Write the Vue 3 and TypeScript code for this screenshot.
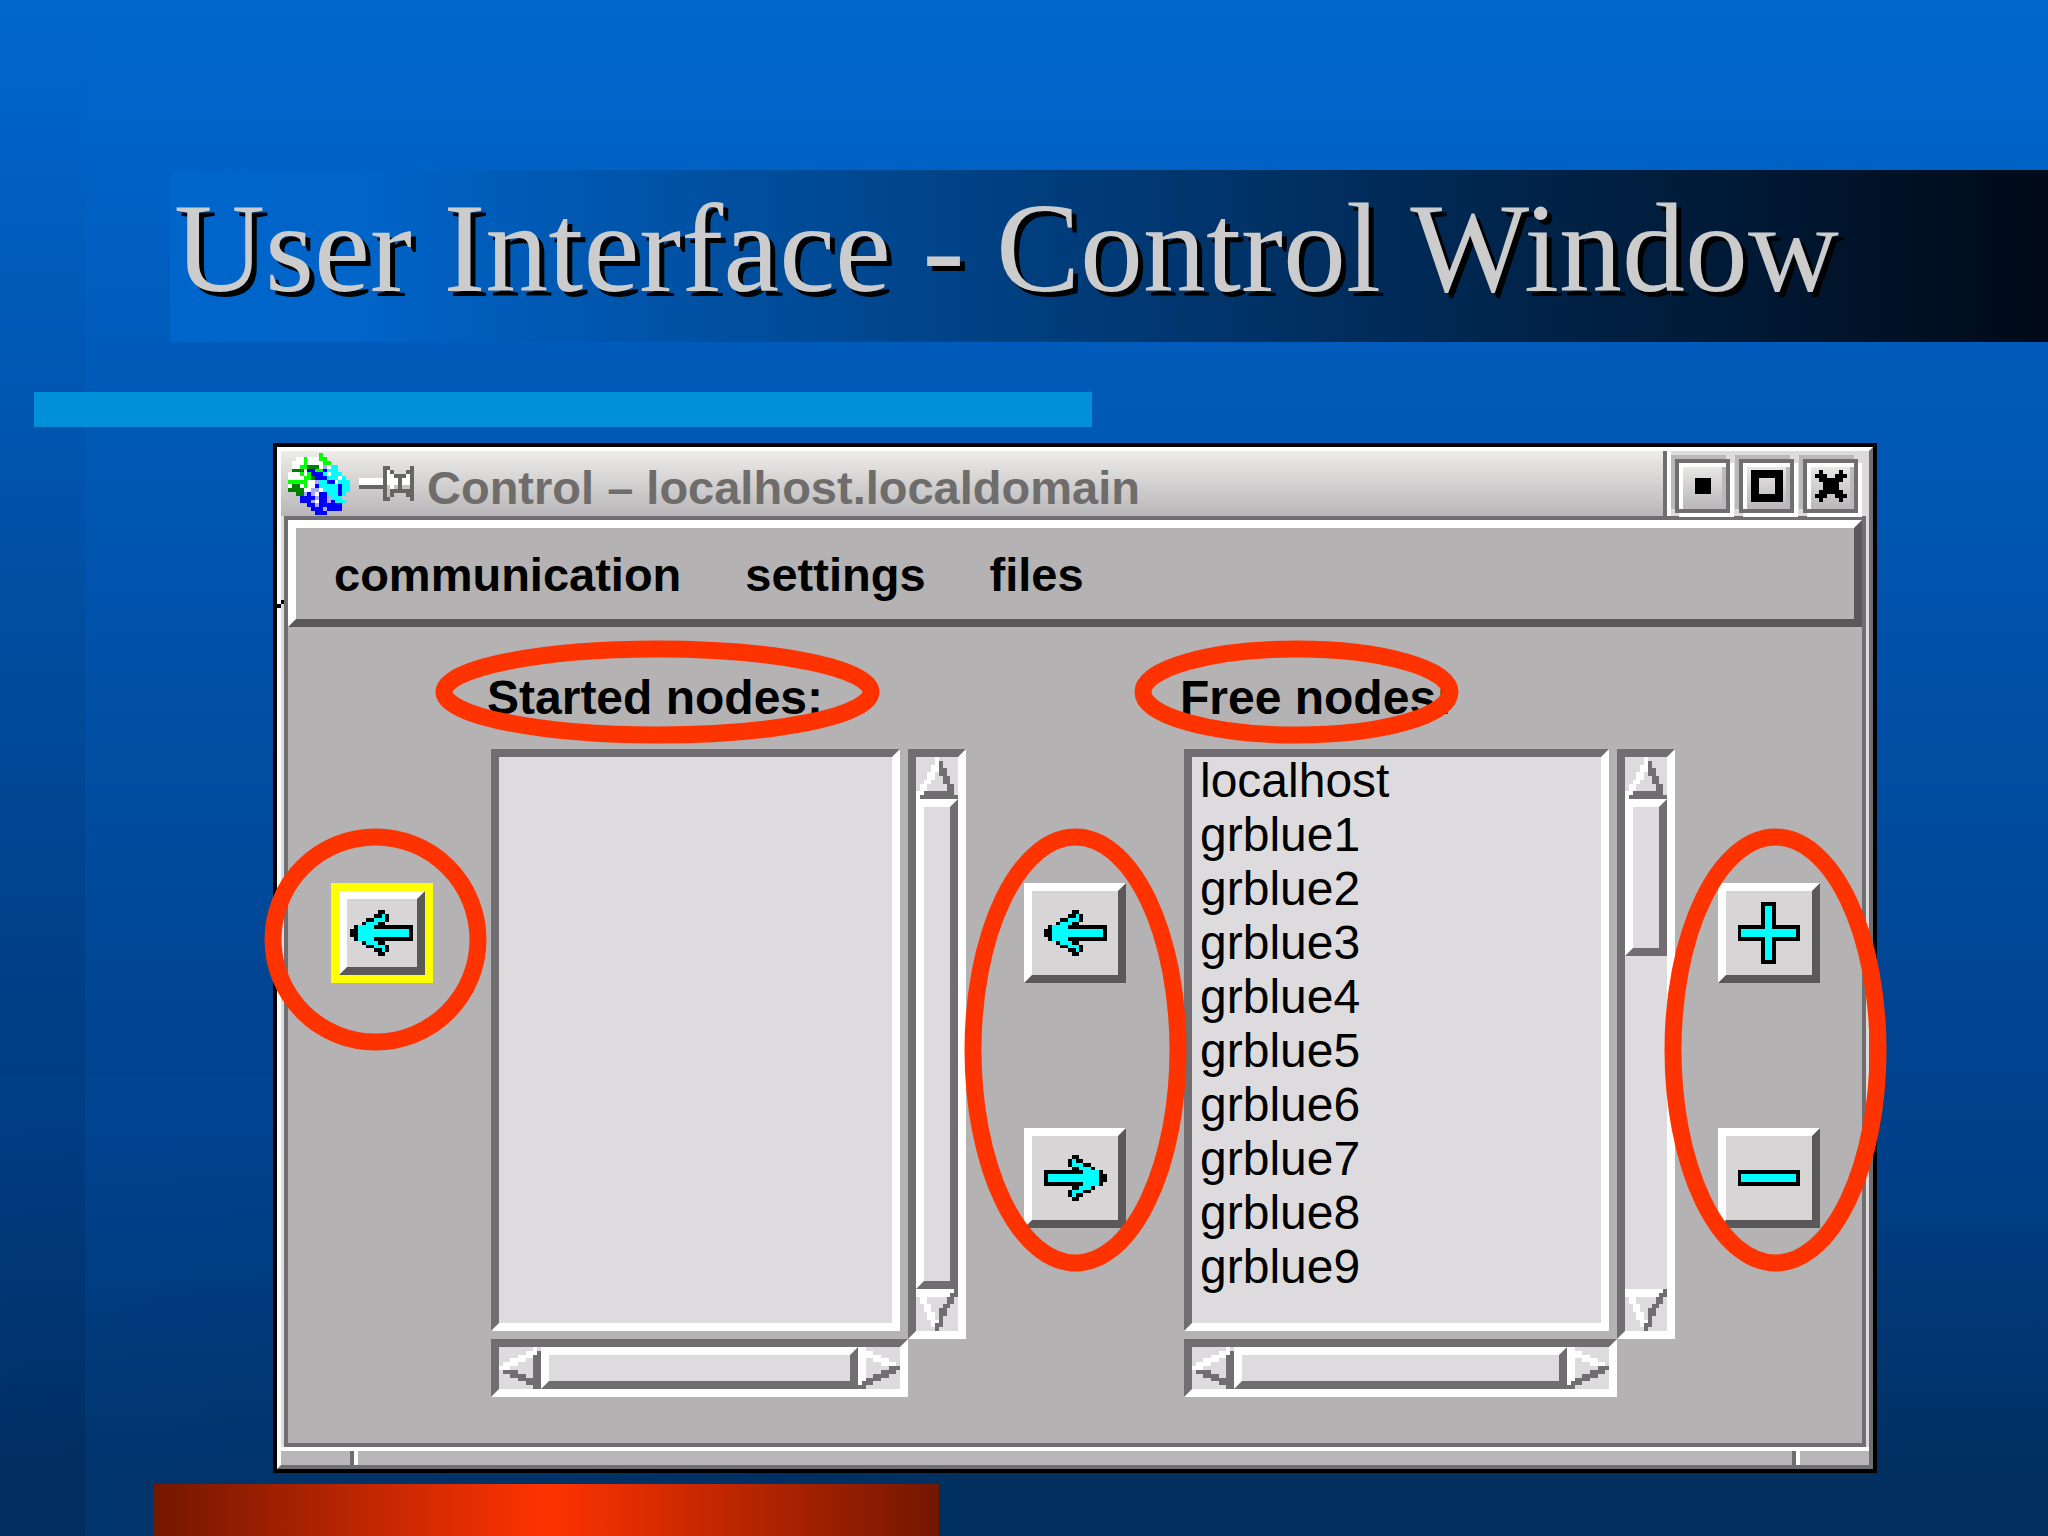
<script setup lang="ts">
import { ref } from 'vue'

interface Cell { x: number; y: number; w: number; fill: string }

const palette: Record<string, string> = {
  k: '#000000', c: '#00ffff', w: '#ffffff', d: '#706e70', g: '#00ff00',
  G: '#008000', b: '#0000ff', l: '#a8a8ff', n: '#666564', m: '#c4c2c4',
}

// Turns rows of colour letters into horizontal runs of cells.
function cells(rows: string[]): Cell[] {
  const out: Cell[] = []
  rows.forEach((row, y) => {
    let x = 0
    while (x < row.length) {
      let w = 1
      while (row[x + w] === row[x]) w++
      const fill = palette[row[x]]
      if (fill) out.push({ x, y, w, fill })
      x += w
    }
  })
  return out
}

const flip = (rows: string[]) => rows.map((r) => r.split('').reverse().join(''))

const arrow = [
  '.......kk.......',
  '......kkck......',
  '....kkccck......',
  '...kccckk.......',
  '.kcccckkkkkkkkkk',
  'kkccccccccccccck',
  'kkccccccccccccck',
  '.kcccckkkkkkkkkk',
  '...kccckk.......',
  '....kkccck......',
  '......kkck......',
  '.......kk.......',
]
const leftArrow = cells(arrow)
const rightArrow = cells(flip(arrow))

const globe = cells([
  '........g.......',
  '..wwgwwwgg......',
  '.wwwgwwwwgg.....',
  '.wwggGGGwlwcc...',
  '.GGGwbbggbccc...',
  'wwwgwgbbbcwccc..',
  'wwwwggGbbbcccwc.',
  'gggggwwlccbbwccc',
  'wGGwgwwbcccccbcc',
  'GGGGwwllwccccbcc',
  '..GGlblwbbcccbc.',
  '...bbbblbblccc..',
  '...bbblwbblbccc.',
  '.....bblbbbbbb..',
  '......bbblbbbb..',
  '.......bbb......',
])

const pin = cells([
  '......nn.....n',
  '......nwn...nn',
  '......nwwnnnwn',
  'wwwwwwnwwwnwwn',
  'wwwwwwnwwwnwwn',
  'nnnnnnnmwmnmmn',
  '......nmnnnnnn',
  '......nmn...nn',
  '......nn.....n',
])

const cross = cells([
  '.k....k.',
  'kkk..kkk',
  '.kkkkkk.',
  '..kkkk..',
  '..kkkk..',
  '.kkkkkk.',
  'kkk..kkk',
  '.k....k.',
])

const up = cells([
  '.....w.....',
  '.....wd....',
  '....wwd....',
  '....wwdd...',
  '...ww.dd...',
  '...ww..dd..',
  '..ww...dd..',
  '.ww.....dd.',
  '.ww.....dd.',
  'wwdddddddd.',
  'wdddddddddd',
])
const down = cells([
  'wwwwwwwwwwd',
  'wwwwwwwwwdd',
  '.ww.....dd.',
  '.ww.....dd.',
  '..ww...dd..',
  '..ww..dd...',
  '...ww.dd...',
  '...ww.d....',
  '....wwd....',
  '....wdd....',
  '.....d.....',
])
const left = cells([
  '.........w.',
  '.......wwwd',
  '.....wwwwdd',
  '...wwww..dd',
  '.wwww....dd',
  'www......dd',
  '.dddd....dd',
  '...dddd..dd',
  '.....dddddd',
  '.......dddd',
  '.........dd',
])
const right = cells([
  'ww.........',
  'wwww.......',
  'wwwwww.....',
  'ww..wwww...',
  'ww....wwww.',
  'ww......ddd',
  'ww....dddd.',
  'ww..dddd...',
  'wwdddd.....',
  'wddd.......',
  'dd.........',
])

const menus = ['communication', 'settings', 'files']

interface NodeList { id: string; label: string; nodes: string[]; thumb: number }
const started: NodeList = { id: 'started', label: 'Started nodes:', nodes: [], thumb: 100 }
const free: NodeList = {
  id: 'free',
  label: 'Free nodes:',
  nodes: ['localhost', ...Array.from({ length: 9 }, (_, i) => `grblue${i + 1}`)],
  thumb: 32,
}
const selected = ref<Record<string, string[]>>({ started: [], free: [] })
</script>

<template>
  <main class="slide">
    <header class="banner"><h1>User Interface - Control Window</h1></header>
    <div class="rule"><span></span></div>

    <section class="window">
      <div class="frame">
        <div class="titlebar">
          <svg class="globe" viewBox="0 0 16 16" preserveAspectRatio="none">
            <rect v-for="(c, i) in globe" :key="i" :x="c.x" :y="c.y" :width="c.w" height="1" :fill="c.fill" />
          </svg>
          <svg class="pin" viewBox="0 0 14 9" preserveAspectRatio="none">
            <rect v-for="(c, i) in pin" :key="i" :x="c.x" :y="c.y" :width="c.w" height="1" :fill="c.fill" />
          </svg>
          <h2>Control – localhost.localdomain</h2>
          <div class="controls">
            <button type="button" aria-label="Minimize"><svg viewBox="0 0 8 8"><rect x="2" y="2" width="4" height="4" /></svg></button>
            <button type="button" aria-label="Maximize"><svg viewBox="0 0 8 8"><path fill-rule="evenodd" d="M0 0h8v8H0zM2 2v4h4V2z" /></svg></button>
            <button type="button" aria-label="Close">
              <svg viewBox="0 0 8 8"><rect v-for="(c, i) in cross" :key="i" :x="c.x" :y="c.y" :width="c.w" height="1" :fill="c.fill" /></svg>
            </button>
          </div>
        </div>

        <div class="body">
          <nav class="menubar">
            <button v-for="m in menus" :key="m" type="button">{{ m }}</button>
          </nav>

          <div class="content">
            <div class="side first">
              <div class="group">
                <button type="button" class="tool focus" aria-label="Move back">
                  <svg viewBox="0 0 16 12" preserveAspectRatio="none">
                    <rect v-for="(c, i) in leftArrow" :key="i" :x="c.x" :y="c.y" :width="c.w" height="1" :fill="c.fill" />
                  </svg>
                </button>
                <svg class="mark mark-single"><ellipse cx="50%" cy="50%" rx="50%" ry="50%" /></svg>
              </div>
            </div>

            <template v-for="list in [started, free]" :key="list.id">
              <div class="nodes">
                <div class="caption">
                  <label :for="list.id">{{ list.label }}</label>
                  <svg class="mark" :class="`mark-${list.id}`"><ellipse cx="50%" cy="50%" rx="50%" ry="50%" /></svg>
                </div>
                <div class="listbox">
                  <select :id="list.id" v-model="selected[list.id]" multiple size="10">
                    <option v-for="n in list.nodes" :key="n" :value="n">{{ n }}</option>
                  </select>
                  <div class="scroll vertical">
                    <button type="button" aria-label="Scroll up"><svg viewBox="0 0 11 11"><rect v-for="(c, i) in up" :key="i" :x="c.x" :y="c.y" :width="c.w" height="1" :fill="c.fill" /></svg></button>
                    <div class="track"><div class="thumb" :style="{ height: list.thumb + '%' }"></div></div>
                    <button type="button" aria-label="Scroll down"><svg viewBox="0 0 11 11"><rect v-for="(c, i) in down" :key="i" :x="c.x" :y="c.y" :width="c.w" height="1" :fill="c.fill" /></svg></button>
                  </div>
                  <div class="scroll horizontal">
                    <button type="button" aria-label="Scroll left"><svg viewBox="0 0 11 11"><rect v-for="(c, i) in left" :key="i" :x="c.x" :y="c.y" :width="c.w" height="1" :fill="c.fill" /></svg></button>
                    <div class="track"><div class="thumb"></div></div>
                    <button type="button" aria-label="Scroll right"><svg viewBox="0 0 11 11"><rect v-for="(c, i) in right" :key="i" :x="c.x" :y="c.y" :width="c.w" height="1" :fill="c.fill" /></svg></button>
                  </div>
                </div>
              </div>

              <div v-if="list.id === 'started'" class="side">
                <div class="group">
                  <button type="button" class="tool" aria-label="Start node">
                    <svg viewBox="0 0 16 12" preserveAspectRatio="none">
                      <rect v-for="(c, i) in leftArrow" :key="i" :x="c.x" :y="c.y" :width="c.w" height="1" :fill="c.fill" />
                    </svg>
                  </button>
                  <button type="button" class="tool" aria-label="Stop node">
                    <svg viewBox="0 0 16 12" preserveAspectRatio="none">
                      <rect v-for="(c, i) in rightArrow" :key="i" :x="c.x" :y="c.y" :width="c.w" height="1" :fill="c.fill" />
                    </svg>
                  </button>
                  <svg class="mark mark-move"><ellipse cx="50%" cy="50%" rx="50%" ry="50%" /></svg>
                </div>
              </div>
            </template>

            <div class="side">
              <div class="group">
                <button type="button" class="tool" aria-label="Add node">
                  <svg class="sign" viewBox="0 0 16 16">
                    <path d="M6 0h4v6h6v4h-6v6H6v-6H0V6h6z" />
                    <path fill="#00ffff" d="M7 1h2v6h6v2H9v6H7V9H1V7h6z" />
                  </svg>
                </button>
                <button type="button" class="tool" aria-label="Remove node">
                  <svg class="sign" viewBox="0 0 16 16">
                    <path d="M0 6h16v4H0z" />
                    <path fill="#00ffff" d="M1 7h14v2H1z" />
                  </svg>
                </button>
                <svg class="mark mark-edit"><ellipse cx="50%" cy="50%" rx="50%" ry="50%" /></svg>
              </div>
            </div>
          </div>
        </div>

        <div class="grip"><span></span><span></span><span></span></div>
        <i class="notch"></i>
      </div>
    </section>

    <div class="footer"><span></span></div>
  </main>
</template>

<style>
body { margin: 0; }
</style>

<style scoped>
* { box-sizing: border-box; }
.slide {
  display: flex;
  flex-direction: column;
  min-height: 100vh;
  overflow: hidden;
  font-family: "Liberation Sans", Arial, sans-serif;
  background:
    linear-gradient(rgba(0, 0, 0, 0), rgba(0, 20, 50, 0.2)) left / 85px 100% no-repeat,
    linear-gradient(90deg, rgba(0, 80, 170, 0.18), rgba(0, 80, 170, 0) 50%) left bottom / 100% 30% no-repeat,
    linear-gradient(#0067cf 0%, #0058b4 30%, #00408a 75%, #002f60 96%, #002f60 100%);
}
button { margin: 0; padding: 0; border: 0; background: none; font: inherit; color: inherit; }
svg { display: block; shape-rendering: crispEdges; }

.banner {
  height: 172px;
  margin: 170px 0 0 170px;
  padding-left: 4px;
  background: linear-gradient(90deg, #0066cc 0%, #0064c8 10%, #003c7a 48%, #00244a 72%, #000a18 100%);
}
h1 {
  margin: 0;
  font: 400 126px/158px "Liberation Serif", "Times New Roman", serif;
  color: #cccccd;
  text-shadow: 5px 5px 0 #000;
  white-space: nowrap;
}
.rule {
  display: grid;
  grid-template-columns: 34fr 1058fr 956fr;
  margin: 50px 0 16px;
}
.rule span { grid-column: 2; height: 35px; background: #0090d9; }

.window { margin: 0 171px 0 273px; border: 4px solid #000; }
.frame {
  position: relative;
  border: 4px solid;
  border-color: #fff #706e70 #706e70 #fff;
  background: #dddbdc;
}
.titlebar {
  display: flex;
  align-items: center;
  height: 65px;
  padding-left: 7px;
  background: linear-gradient(#edecea, #b8b6b8);
}
.globe { width: 62px; height: 62px; margin-right: 9px; }
.pin { width: 55px; height: 35px; margin-right: 13px; }
h2 {
  flex: 1;
  margin: 0;
  padding-top: 8px;
  font-size: 47px;
  line-height: 57px;
  font-weight: 700;
  color: #6e6d6b;
  white-space: nowrap;
}
.controls {
  display: flex;
  align-items: center;
  gap: 9px;
  height: 65px;
  padding: 4px 11px 0 8px;
  border-left: 4px solid #706e70;
  background: #dddbdc;
  box-shadow: inset 4px 0 0 #fff;
}
.controls button {
  display: grid;
  place-items: center;
  width: 55px;
  height: 54px;
  border: 4px solid #706e70;
  background: linear-gradient(#edecea, #b8b6b8);
  box-shadow: -4px -4px 0 #bab8b9, 4px 4px 0 #fff, inset 4px 4px 0 #fff, inset -4px -4px 0 #bab8b9;
}
.controls svg { width: 32px; height: 32px; }

.body { margin: 0 3px; border: 4px solid #706e70; background: #b4b2b3; }
.menubar {
  display: flex;
  align-items: center;
  gap: 64px;
  height: 107px;
  padding: 2px 0 0 38px;
  border: 8px solid;
  border-color: #fff #5a5859 #5a5859 #fff;
  font-size: 47px;
  font-weight: 700;
  line-height: 54px;
  color: #000;
}
.content {
  display: grid;
  grid-template-columns: 203fr 475fr 218fr 491fr 187fr;
  padding-bottom: 46px;
}
.side { display: flex; justify-content: center; align-items: flex-start; padding-top: 256px; }
.first { padding-right: 16px; }
.group { position: relative; display: flex; flex-direction: column; gap: 145px; }
.tool {
  display: grid;
  place-items: center;
  width: 102px;
  height: 100px;
  border: 8px solid;
  border-color: #fff #5a5859 #5a5859 #fff;
  background: #d7d5d6;
}
.tool svg { width: 63px; height: 46px; }
.tool .sign { width: 63px; height: 62px; }
.focus {
  width: 86px;
  height: 84px;
  margin: 8px;
  box-shadow: 0 0 0 8px #ff0;
}
.mark {
  position: absolute;
  overflow: visible;
  fill: none;
  stroke: #ff3300;
  stroke-width: 17px;
  shape-rendering: auto;
  pointer-events: none;
  z-index: 1;
}
.mark-single { left: -58px; top: -46px; width: 205px; height: 205px; }
.mark-move { left: -51px; top: -46px; width: 205px; height: 426px; }
.mark-edit { left: -45px; top: -46px; width: 205px; height: 426px; }
.mark-started { left: -43px; top: -22px; width: 427px; height: 86px; }
.mark-free { left: -37px; top: -22px; width: 307px; height: 86px; }

.caption {
  position: relative;
  margin: 44px 0 22px -4px;
  font-size: 48px;
  font-weight: 700;
  line-height: 54px;
  padding-bottom: 2px;
  color: #000;
}
.caption label { display: block; }
.listbox {
  display: grid;
  grid-template-columns: 1fr 8px 58px;
  grid-template-rows: 582px 8px 58px;
}
.listbox select {
  appearance: none;
  grid-area: 1 / 1;
  width: 100%;
  height: 100%;
  margin: 0;
  padding: 0 8px;
  overflow: hidden;
  border: 8px solid;
  border-color: #706e70 #fff #fff #706e70;
  border-radius: 0;
  outline: 0;
  background: #dddbdd;
  font: 400 48px/54px "Liberation Sans", Arial, sans-serif;
  color: #000;
}
.listbox option { height: 54px; min-height: 0; margin: -4px 0 4px; padding: 0; color: #000; }
.scroll {
  display: flex;
  border: 8px solid;
  border-color: #706e70 #fff #fff #706e70;
  background: #dddbdd;
}
.scroll button { flex: none; width: 42px; height: 42px; }
.scroll svg { width: 42px; height: 42px; }
.vertical { grid-area: 1 / 3 / 3 / 4; flex-direction: column; }
.horizontal { grid-area: 3 / 1 / 4 / 3; }
.track { flex: 1; min-width: 0; min-height: 0; }
.thumb {
  height: 100%;
  border: 8px solid;
  border-color: #fff #706e70 #706e70 #fff;
}

.grip { display: grid; grid-template-columns: 73px 1fr 73px; height: 18px; }
.grip span {
  border-top: 4px solid #fff;
  background: #b8b6b8;
}
.grip span + span { border-left: 4px solid #fff; }
.grip span:not(:last-child) { box-shadow: inset -4px 0 0 #706e70; }
.notch {
  position: absolute;
  left: -4px;
  top: 149px;
  width: 7px;
  height: 8px;
  background:
    linear-gradient(#000, #000) right top / 3px 4px no-repeat,
    linear-gradient(#000, #000) left bottom / 4px 4px no-repeat;
}

.footer {
  display: grid;
  grid-template-columns: 153fr 786fr 1109fr;
  margin-top: 11px;
}
.footer span {
  grid-column: 2;
  height: 52px;
  background: linear-gradient(90deg, #731700, #ff3300 50%, #731700);
}
</style>
